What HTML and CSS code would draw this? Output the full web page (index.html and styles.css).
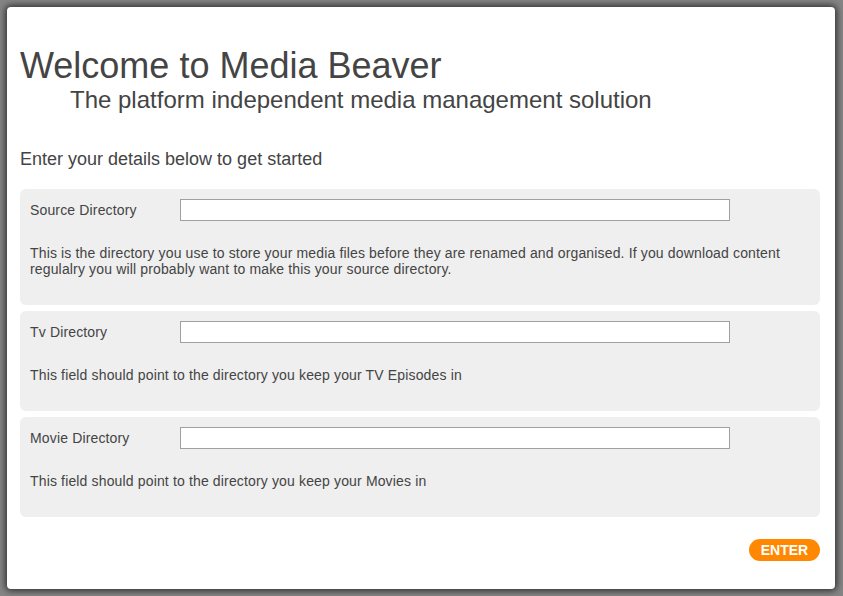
FILE: index.html
```html
<!DOCTYPE html>
<html>
<head>
<meta charset="utf-8">
<link rel="stylesheet" href="styles.css">
</head>
<body>
<div class="panel">
  <h1 class="title">Welcome to Media Beaver</h1>
  <h2 class="subtitle">The platform independent media management solution</h2>
  <p class="intro">Enter your details below to get started</p>
  <div class="cards">
    <div class="card card-tall">
      <div class="row">
        <label class="label">Source Directory</label>
        <input class="field" type="text">
      </div>
      <p class="desc">This is the directory you use to store your media files before they are renamed and organised. If you download content regulalry you will probably want to make this your source directory.</p>
    </div>
    <div class="card">
      <div class="row">
        <label class="label">Tv Directory</label>
        <input class="field" type="text">
      </div>
      <p class="desc">This field should point to the directory you keep your TV Episodes in</p>
    </div>
    <div class="card">
      <div class="row">
        <label class="label">Movie Directory</label>
        <input class="field" type="text">
      </div>
      <p class="desc">This field should point to the directory you keep your Movies in</p>
    </div>
  </div>
  <div class="actions">
    <button class="enter">ENTER</button>
  </div>
</div>
</body>
</html>
```
FILE: styles.css
```css
html, body {
  margin: 0;
  height: 100%;
}
body {
  background: #858585;
  padding: 7px 8px 7px 7px;
  box-sizing: border-box;
  font-family: "Liberation Sans", Arial, sans-serif;
  color: #444;
}
.panel {
  background: #fff;
  height: 582px;
  width: 828px;
  border-radius: 4px;
  box-shadow: 0 0 6px 2px #333;
  box-sizing: border-box;
  padding: 38px 15px 0 13px;
}
.title {
  margin: 0;
  font-size: 36px;
  font-weight: normal;
  line-height: 41px;
  color: #444;
}
.subtitle {
  margin: 0 0 0 50px;
  font-size: 24px;
  font-weight: normal;
  line-height: 27px;
  color: #444;
}
.intro {
  margin: 36px 0 0 0;
  font-size: 18px;
  line-height: 21px;
}
.cards {
  margin-top: 19px;
  display: flex;
  flex-direction: column;
  gap: 6px;
}
.card {
  background: #efefef;
  border-radius: 6px;
  padding: 10px 10px 28px 10px;
}
.row {
  display: flex;
  align-items: center;
  height: 22px;
}
.label {
  width: 150px;
  font-size: 14px;
  letter-spacing: 0.15px;
  color: #444;
}
.field {
  width: 550px;
  height: 22px;
  box-sizing: border-box;
  border: 1px solid #a0a0a0;
  background: #fff;
  margin: 0;
  padding: 0 3px;
}
.desc {
  margin: 24px 0 0 0;
  font-size: 14px;
  letter-spacing: 0.15px;
  line-height: 16px;
  color: #444;
}
.card-tall .desc {
  padding-right: 20px;
}
.actions {
  display: flex;
  justify-content: flex-end;
  margin-top: 22px;
}
.enter {
  background: #ff8800;
  color: #fff;
  border: none;
  border-radius: 11px;
  height: 22px;
  width: 71px;
  font-family: "Liberation Sans", Arial, sans-serif;
  font-weight: bold;
  font-size: 14px;
  padding: 0;
}
```
